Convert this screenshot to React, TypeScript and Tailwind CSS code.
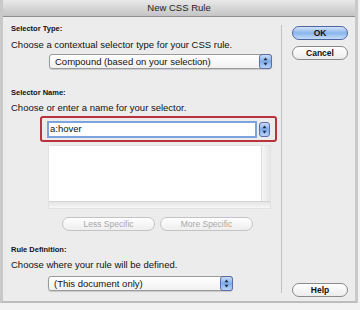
import React from "react";

const Stepper = ({ className = "" }: { className?: string }) => (
  <div
    className={`flex flex-col items-center justify-center rounded-[3px] border border-[#5b6fa6] bg-gradient-to-b from-[#c9dcf6] via-[#7fadea] to-[#b7d3f6] ${className}`}
  >
    <svg width="5" height="9" viewBox="0 0 5 9">
      <path d="M2.5 0.5 L4.5 3.3 L0.5 3.3 Z" fill="#1d2a44" />
      <path d="M2.5 8.5 L4.5 5.7 L0.5 5.7 Z" fill="#1d2a44" />
    </svg>
  </div>
);

const Select = ({ label, width }: { label: string; width: string }) => (
  <div
    className={`${width} flex h-[15px] items-center justify-between rounded-[3px] border border-[#9a9a9a] bg-gradient-to-b from-white to-[#f1f1f1] pl-[5px] shadow-[0_1px_1px_rgba(0,0,0,0.15)]`}
  >
    <span className="text-[9.5px] leading-none text-[#111]">{label}</span>
    <Stepper className="-mr-px h-[15px] w-[13px]" />
  </div>
);

const PillButton = ({
  label,
  primary,
  disabled,
  width = "w-[56px]",
}: {
  label: string;
  primary?: boolean;
  disabled?: boolean;
  width?: string;
}) => (
  <div
    className={`${width} flex h-[14px] items-center justify-center rounded-full border text-[8.5px] leading-none ${
      primary
        ? "border-[#4d64a3] bg-gradient-to-b from-[#d3e4fa] via-[#8ab5ec] to-[#c6ddf8] font-bold text-[#111]"
        : disabled
        ? "border-[#c4c4c4] bg-gradient-to-b from-white to-[#eeeeee] text-[#a8a8a8]"
        : "border-[#8a8a8a] bg-gradient-to-b from-white to-[#ececec] font-bold text-[#111]"
    }`}
  >
    {label}
  </div>
);

export default function App() {
  return (
    <div
      className="h-[310px] w-[360px] bg-[#f2f2f2]"
      style={{ fontFamily: '"Liberation Sans", Arial, sans-serif' }}
    >
      <div className="flex h-[303px] w-[358px] flex-col border-x-[3px] border-b-[2px] border-x-[#c9c9c9] border-b-[#bdbdbd] bg-[#ececec]">
        <div className="flex h-[17px] items-center justify-center border-b border-[#8f8f8f] bg-gradient-to-b from-[#e9e9e9] to-[#c4c4c4] text-[9.5px] text-[#222]">
          New CSS Rule
        </div>
        <div className="flex flex-1">
          <div className="w-[278px] pl-[8px] pt-[7px] text-[#111]">
            <div className="text-[7.5px] font-bold leading-[9px]">Selector Type:</div>
            <div className="mt-[6px] text-[9.5px] leading-[11px]">
              Choose a contextual selector type for your CSS rule.
            </div>
            <div className="mt-[4px] pl-[38px]">
              <Select label="Compound (based on your selection)" width="w-[223px]" />
            </div>
            <div className="mt-[19px] text-[7.5px] font-bold leading-[9px]">Selector Name:</div>
            <div className="mt-[5px] text-[9.5px] leading-[11px]">
              Choose or enter a name for your selector.
            </div>
            <div className="ml-[29px] mt-[3px] flex h-[26px] w-[237px] items-center rounded-[3px] border-[2px] border-[#b8333c] pl-[5px]">
              <div className="flex h-[17px] w-[210px] items-center border-[2px] border-[#7ba4dc] bg-white pl-[1px] text-[9.5px] leading-none">
                a:hover
              </div>
              <Stepper className="ml-[2px] h-[15px] w-[11px]" />
            </div>
            <div className="ml-[37px] mt-[3px] flex h-[64px] w-[223px] flex-col border border-[#e2e2e2]">
              <div className="flex flex-1">
                <div className="flex-1 bg-white" />
                <div className="w-[9px] border-l border-[#dcdcdc] bg-gradient-to-r from-[#f6f6f6] to-[#e6e6e6]" />
              </div>
              <div className="h-[7px] border-t border-[#d4d4d4] bg-gradient-to-b from-[#e4e4e4] to-[#f6f6f6]" />
            </div>
            <div className="ml-[51px] mt-[8px] flex gap-[5px]">
              <PillButton label="Less Specific" disabled width="w-[93px]" />
              <PillButton label="More Specific" disabled width="w-[93px]" />
            </div>
            <div className="mt-[14px] text-[7.5px] font-bold leading-[9px]">Rule Definition:</div>
            <div className="mt-[5px] text-[9.5px] leading-[11px]">
              Choose where your rule will be defined.
            </div>
            <div className="mt-[6px] pl-[37px]">
              <Select label="(This document only)" width="w-[185px]" />
            </div>
          </div>
          <div className="my-[8px] w-px bg-[#c2c2c2]" />
          <div className="flex flex-1 flex-col pb-[4px] pl-[10px] pt-[9px]">
            <PillButton label="OK" primary />
            <div className="mt-[6px]">
              <PillButton label="Cancel" />
            </div>
            <div className="mt-auto">
              <PillButton label="Help" />
            </div>
          </div>
        </div>
      </div>
    </div>
  );
}
